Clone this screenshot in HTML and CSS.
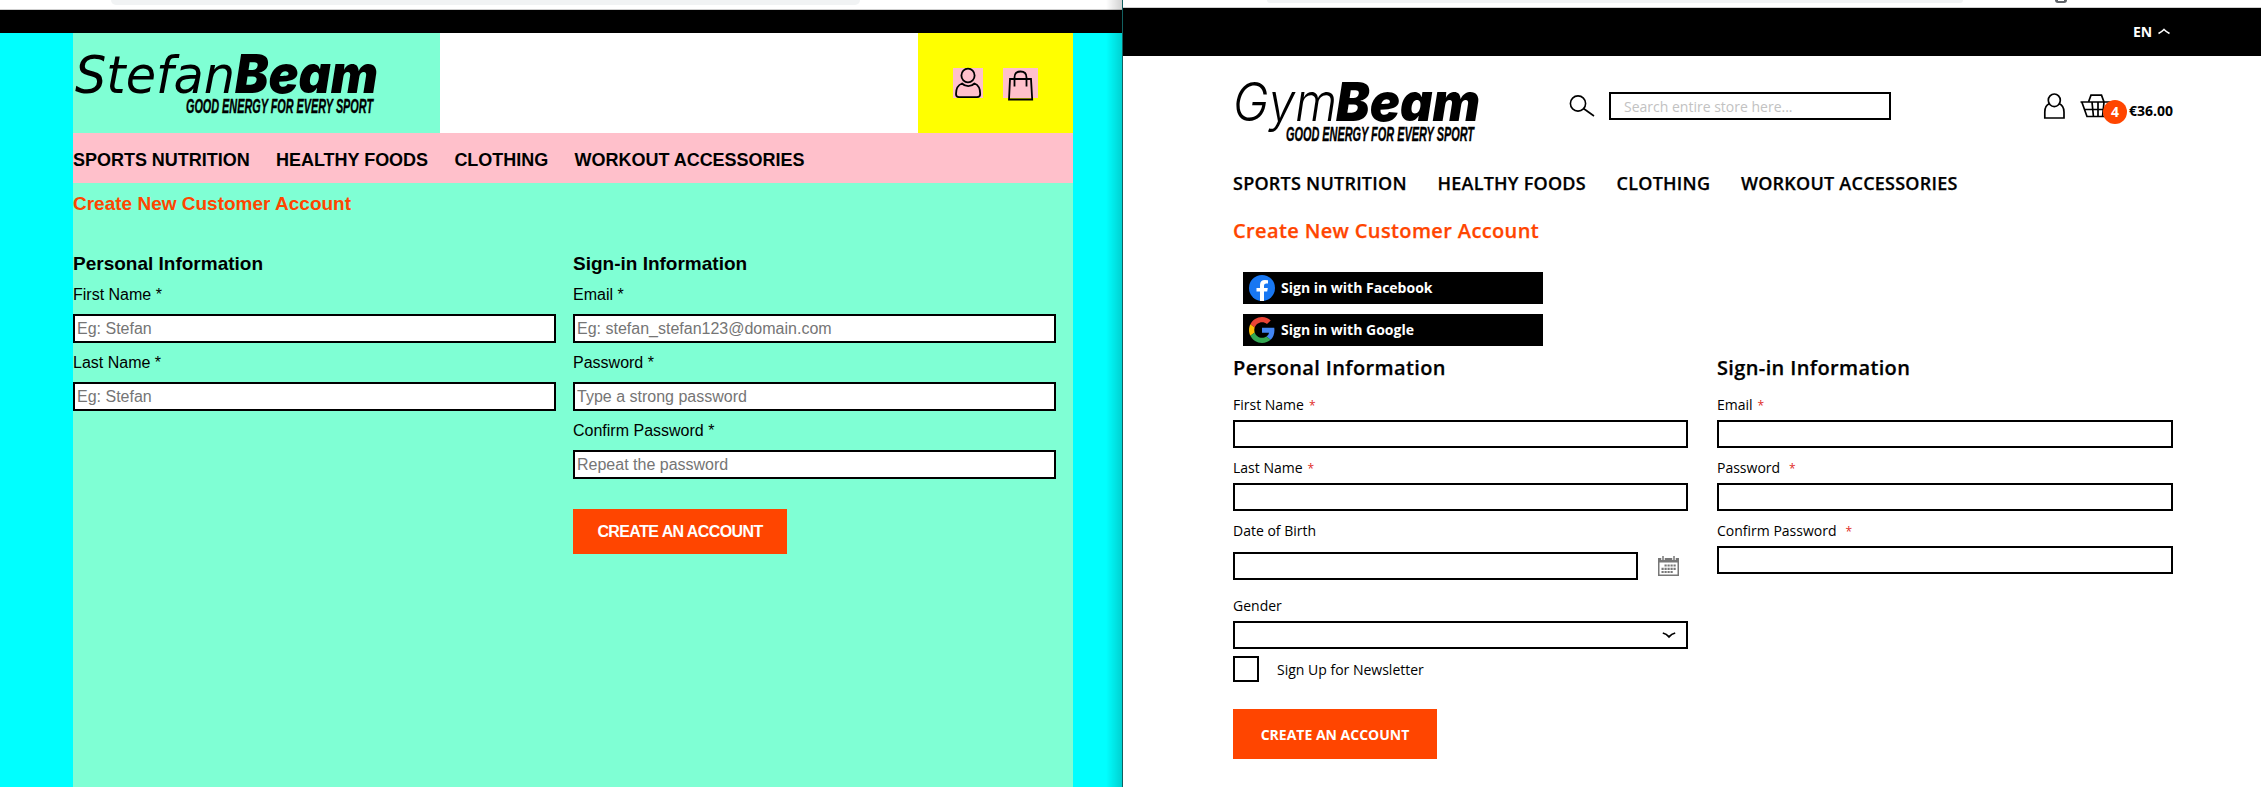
FILE: index.html
```html
<!DOCTYPE html>
<html lang="en">
<head>
<meta charset="utf-8">
<title>Create New Customer Account</title>
<link rel="stylesheet" href="styles.css">
</head>
<body>
<main class="screens">
  <section class="window stefan">
    <div class="chrome"><div class="address"></div></div>
    <div class="topbar"></div>
    <div class="page">
      <header class="header">
        <div class="brand">
          <svg class="logo" width="320" height="70" viewBox="0 0 320 70" role="img" aria-label="StefanBeam">
            <text class="light" x="0" y="44" textLength="160" lengthAdjust="spacingAndGlyphs">Stefan</text>
            <text class="heavy" x="160" y="44" textLength="143" lengthAdjust="spacingAndGlyphs">Beam</text>
            <text class="tag" x="111" y="64" textLength="187" lengthAdjust="spacingAndGlyphs">GOOD ENERGY FOR EVERY SPORT</text>
          </svg>
        </div>
        <div class="actions">
          <span class="tile user"><svg width="30" height="30" viewBox="0 0 30 30"><ellipse cx="15" cy="7.500" rx="6.600" ry="6.800"/><path d="M9 15.500C5 17 3 21 3 26Q3 29.200 6 29.200H24Q27.200 29.200 27.200 26C27.200 21 25.500 17 21.500 15.500C18 19 12.500 19 9 15.500Z"/></svg></span>
          <span class="tile bag"><svg width="35" height="34" viewBox="0 0 35 34"><path d="M7 11H28L29.200 31.500H6Z"/><path d="M11.500 18.500V9.500Q11.500 3.500 17.500 3.500T23.500 9.500V18.500"/></svg></span>
        </div>
      </header>
      <nav class="nav"><a>SPORTS NUTRITION</a><a>HEALTHY FOODS</a><a>CLOTHING</a><a>WORKOUT ACCESSORIES</a></nav>
      <h1>Create New Customer Account</h1>
      <form class="form">
        <div class="col">
          <h2>Personal Information</h2>
          <label>First Name *</label><input type="text" placeholder="Eg: Stefan">
          <label>Last Name *</label><input type="text" placeholder="Eg: Stefan">
        </div>
        <div class="col">
          <h2>Sign-in Information</h2>
          <label>Email *</label><input type="text" placeholder="Eg: stefan_stefan123@domain.com">
          <label>Password *</label><input type="password" placeholder="Type a strong password">
          <label>Confirm Password *</label><input type="password" placeholder="Repeat the password">
          <button type="button"><span>CREATE AN ACCOUNT</span></button>
        </div>
      </form>
    </div>
    <div class="edge"></div>
  </section>

  <section class="window gym">
    <div class="chrome"><div class="address"></div><div class="ext"></div></div>
    <div class="topbar"><span class="lang">EN</span><svg width="12" height="7" viewBox="0 0 12 7"><path d="M.5 5.500Q4 3.500 6 1.500Q8 3.500 11.500 5.500"/></svg></div>
    <div class="page">
      <header class="header">
        <svg class="logo" width="260" height="70" viewBox="0 0 260 70" role="img" aria-label="GymBeam">
          <text class="thin" x="0" y="45" textLength="104" lengthAdjust="spacingAndGlyphs">Gym</text>
          <text class="heavy" x="103" y="45" textLength="144" lengthAdjust="spacingAndGlyphs">Beam</text>
          <text class="tag" x="53" y="65" textLength="188" lengthAdjust="spacingAndGlyphs">GOOD ENERGY FOR EVERY SPORT</text>
        </svg>
        <svg class="search-icon" width="26" height="22" viewBox="0 0 26 22"><circle cx="9" cy="8.500" r="7.600"/><path d="M14.500 13.500L25 21" /></svg>
        <input class="search" type="text" placeholder="Search entire store here...">
        <div class="actions">
          <svg class="user" width="22" height="26" viewBox="0 0 22 26"><path d="M5.500 10.500C2 12 .8 15 .8 19V25H20V19C20 15 18.500 12 15 10.500"/><ellipse cx="10.300" cy="7.300" rx="6" ry="6.300"/></svg>
          <div class="cart">
            <svg width="36" height="24" viewBox="0 0 36 24"><path d="M.5 8H35M2 8.500L7 22.500H29L34 8.500M8.500 8L11 1.200H21.500L24 8M4.500 15.500H31M12 8L13.500 23M18 8V23M24 8L22.500 23"/></svg>
            <span class="badge">4</span>
          </div>
          <span class="price">€36.00</span>
        </div>
      </header>
      <nav class="nav"><a>SPORTS NUTRITION</a><a>HEALTHY FOODS</a><a>CLOTHING</a><a>WORKOUT ACCESSORIES</a></nav>
      <h1>Create New Customer Account</h1>
      <div class="social">
        <a><svg width="26" height="26" viewBox="0 0 26 26"><circle cx="13" cy="13" r="13" fill="#1877f2"/><path fill="#fff" d="M11 26V16.500H7.500V13H11V10Q11 5 16 5Q17.500 5 19 5.300V8.500H17.300Q15 8.500 15 10.500V13H18.800L18.200 16.500H15V26Z"/></svg><span>Sign in with Facebook</span></a>
        <a><svg width="26" height="26" viewBox="0 0 48 48"><path fill="#ea4335" d="M24 9.500c3.540 0 6.710 1.220 9.210 3.600l6.850-6.850C35.900 2.380 30.470 0 24 0 14.620 0 6.510 5.380 2.560 13.220l7.980 6.190C12.430 13.720 17.740 9.500 24 9.500z"/><path fill="#4285f4" d="M46.980 24.550c0-1.570-.15-3.090-.38-4.550H24v9.020h12.940c-.58 2.960-2.260 5.480-4.780 7.180l7.730 6c4.510-4.180 7.090-10.360 7.090-17.650z"/><path fill="#fbbc05" d="M10.530 28.590c-.48-1.450-.76-2.990-.76-4.590s.27-3.140.76-4.590l-7.980-6.190C.92 16.460 0 20.120 0 24c0 3.880.92 7.540 2.560 10.780l7.970-6.190z"/><path fill="#34a853" d="M24 48c6.480 0 11.930-2.130 15.890-5.810l-7.730-6c-2.150 1.450-4.920 2.300-8.160 2.300-6.260 0-11.570-4.220-13.470-9.910l-7.980 6.190C6.510 42.620 14.620 48 24 48z"/></svg><span>Sign in with Google</span></a>
      </div>
      <form class="form">
        <div class="col">
          <h2>Personal Information</h2>
          <label>First Name<i>*</i></label><input type="text">
          <label>Last Name<i>*</i></label><input type="text">
          <label>Date of Birth</label>
          <div class="date"><input type="text"><svg width="21" height="20" viewBox="0 0 21 20"><path fill="#777" d="M0 2H21V20H0ZM1.500 6.500V18.500H19.500V6.500Z" fill-rule="evenodd"/><path stroke="#fff" stroke-width="3.500" d="M5 0V4M16 0V4"/><path stroke="#777" stroke-width="1.500" d="M5 0V4M16 0V4"/><path stroke="#777" stroke-width="2.200" stroke-dasharray="2.200 .8" d="M6.500 9.500H18M3.500 12.800H18M3.500 16H15"/></svg></div>
          <label>Gender</label>
          <div class="select"><svg width="14" height="7" viewBox="0 0 14 7"><path d="M.8 1Q4.500 2 7 4.800Q9.500 2 13.200 1"/></svg></div>
          <div class="check"><span class="box"></span><span>Sign Up for Newsletter</span></div>
          <button type="button"><span>CREATE AN ACCOUNT</span></button>
        </div>
        <div class="col">
          <h2>Sign-in Information</h2>
          <label>Email<i>*</i></label><input type="text">
          <label>Password<i class="far">*</i></label><input type="password">
          <label>Confirm Password<i class="far">*</i></label><input type="password">
        </div>
      </form>
    </div>
  </section>
</main>
</body>
</html>
```
FILE: styles.css
```css
* { box-sizing: border-box; }
body { margin: 0; overflow: hidden; background: #fff; color: #000; }
h1, h2 { margin: 0; }
svg { display: block; flex: none; fill: none; overflow: visible; }
i { font-style: normal; }
button { border: 0; background: #ff4500; color: #fff; font: inherit; font-weight: 700; padding: 0; display: block; }
.screens { display: flex; width: 2261px; height: 787px; }
.window { height: 787px; position: relative; }
.header, .nav, .form, .chrome { display: flex; }
.nav a { white-space: nowrap; }
.col { display: flex; flex-direction: column; align-items: stretch; }
.col button { align-self: flex-start; }
input { display: block; border: 2px solid #000; border-radius: 0; background: #fff; outline: 0; margin: 0; }

.logo text { fill: #000; }
.light { font: italic 51px "DejaVu Sans", sans-serif; }
.thin { font: italic 300 53px Inter, sans-serif; }
.heavy { font: italic 900 53px Inter, sans-serif; }
.tag { font: italic 700 20px "Liberation Sans Narrow", "Liberation Sans", sans-serif; stroke: #000; stroke-width: .4px; }

/* Left window */
.stefan { width: 1123px; background: #0ff; font: 16px "Liberation Sans", Arial, sans-serif; border-right: 1px solid #126060; }
.stefan .chrome { height: 10px; background: #fff; border-bottom: 1px solid #cfcfcf; padding-left: 111px; }
.stefan .address { width: 749px; height: 5px; background: #f1f3f4; border-radius: 0 0 10px 10px; }
.stefan .topbar { height: 23px; background: #000; }
.stefan .page { width: 1000px; height: 754px; margin-left: 73px; background: #7fffd4; }
.stefan .header { height: 100px; background: #fff; justify-content: space-between; }
.stefan .brand { width: 367px; background: #7fffd4; padding: 16px 0 0 2px; }
.stefan .actions { width: 155px; background: #ff0; display: flex; gap: 20px; padding: 35px 0 0 35px; }
.tile { height: 30px; background: #ffc0cb; }
.tile svg { stroke: #000; stroke-width: 1.8; }
.tile.user { width: 30px; }
.tile.bag { width: 35px; }
.stefan .nav { height: 50px; background: #ffc0cb; gap: 26.300px; font-size: 18px; font-weight: 700; line-height: 54px; letter-spacing: -.02px; }
.stefan h1 { font-size: 19px; line-height: 24px; color: #ff4500; padding-top: 9px; height: 69px; }
.stefan .form { gap: 17px; }
.stefan .col { width: 483px; }
.stefan h2 { font-size: 19px; line-height: 24px; height: 33px; }
.stefan label { line-height: 20px; height: 29px; }
.stefan input { height: 29px; padding: 2px; font: 16px "Liberation Sans", Arial, sans-serif; margin-bottom: 10px; }
.stefan input::placeholder { color: #757575; opacity: 1; }
.stefan button { width: 214px; height: 45px; margin-top: 20px; font-size: 16px; letter-spacing: -.6px; }
.edge { position: absolute; top: 0; right: 0; width: 16px; height: 787px; background: linear-gradient(to right, transparent, rgba(0,0,0,.18)); }

/* Right window */
.gym { width: 1138px; font: 14px "Open Sans", sans-serif; }
.gym .chrome { height: 8px; border-bottom: 1px solid #cfcfcf; padding-left: 144px; }
.gym .address { width: 696px; height: 3px; background: #f1f3f4; border-radius: 0 0 8px 8px; }
.ext { width: 12px; height: 3px; margin-left: 92px; border: 3px solid #5f6368; border-top: 0; border-bottom-width: 2px; border-radius: 0 0 3px 3px; }
.gym .topbar { height: 48px; background: #000; color: #fff; display: flex; align-items: center; padding: 0 0 1px 1010px; font-weight: 700; }
.lang { width: 25px; }
.gym .topbar svg { stroke: #fff; stroke-width: 1.6; }
.gym .page { width: 940px; margin-left: 110px; }
.gym .header { height: 114px; padding-top: 20px; }
.search-icon { stroke: #000; stroke-width: 1.6; margin: 19px 0 0 76px; }
.search { width: 282px; height: 28px; margin: 16px 0 0 14px; padding: 0 13px; font: 14px "Open Sans", sans-serif; }
.search::placeholder { color: #c2c2c2; opacity: 1; }
.gym .actions { display: flex; margin: 17px 0 0 153px; }
.gym .actions svg { stroke: #000; stroke-width: 1.7; }
.cart { position: relative; width: 49px; margin: 1px 0 0 14px; }
.badge { position: absolute; left: 23px; top: 6px; width: 24px; height: 24px; border-radius: 50%; background: #ff4500; color: #fff; font-weight: 700; line-height: 24px; text-align: center; }
.price { font-weight: 700; line-height: 19px; margin-top: 8px; }
.gym .nav { gap: 30.700px; font-size: 18px; font-weight: 600; letter-spacing: .24px; line-height: 26px; height: 47px; }
.gym h1 { font-size: 20px; font-weight: 600; letter-spacing: .37px; line-height: 28px; height: 54px; color: #ff4500; }
.gym .nav, .gym h1, .gym h2 { -webkit-text-stroke: .25px; }
.social { display: flex; flex-direction: column; gap: 10px; padding-left: 10px; height: 82px; margin-top: 1px; }
.social a { display: flex; align-items: center; gap: 6px; width: 300px; height: 32px; background: #000; color: #fff; font-weight: 700; padding: 0 0 1px 6px; }
.gym .form { gap: 29px; }
.gym .col { width: 455px; }
.gym .col + .col { width: 456px; }
.gym h2 { font-size: 20px; font-weight: 600; letter-spacing: .37px; line-height: 28px; height: 41px; }
.gym label { line-height: 20px; height: 25px; }
.gym label i { color: #e02b27; font-size: 12px; line-height: 1; margin-left: 5px; }
.gym label .far { margin-left: 9px; }
.gym .col input { height: 28px; margin-bottom: 10px; width: 100%; }
.date { display: flex; align-items: center; gap: 20px; padding-top: 6px; margin-bottom: 16px; }
.gym .date input { width: 405px; margin: 0; }
.select { height: 28px; border: 2px solid #000; padding: 9px 0 0 427px; }
.select svg { stroke: #000; stroke-width: 1.8; }
.check { display: flex; align-items: center; gap: 18px; margin-top: 7px; }
.box { width: 26px; height: 26px; border: 2px solid #000; }
.gym button { width: 204px; height: 50px; margin-top: 27px; }
```
